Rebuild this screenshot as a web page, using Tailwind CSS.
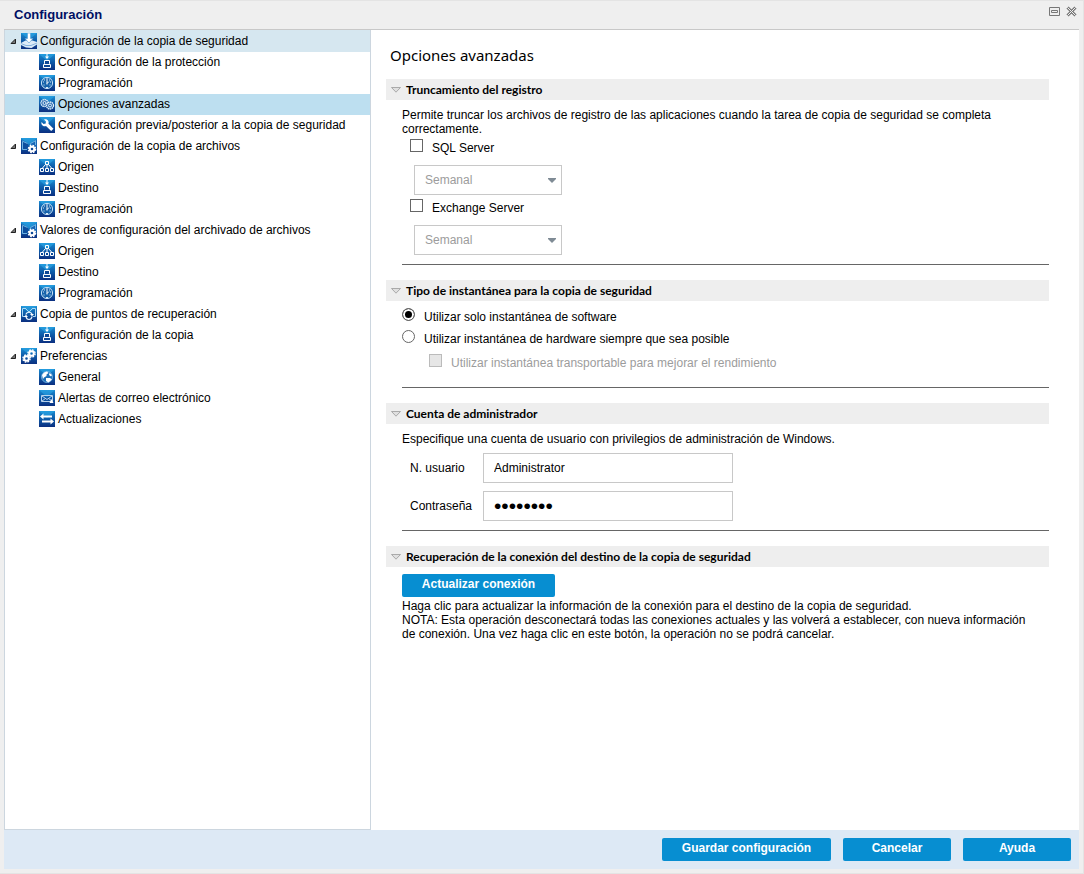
<!DOCTYPE html>
<html lang="es">
  <head>
    <meta charset="UTF-8" />
    <meta name="viewport" content="width=device-width, initial-scale=1.0" />
    <title>Configuración</title>
    <script src="https://cdn.jsdelivr.net/npm/@tailwindcss/browser@4"></script>
  </head>

  <body class="font-['Liberation_Sans',Arial,sans-serif] text-xs leading-[14px] text-black">
    <!-- icon sprites -->
    <svg class="absolute size-0" aria-hidden="true">
      <defs>
        <linearGradient id="tile" x1="0" y1="0" x2="0" y2="1">
          <stop offset="0" stop-color="#1a8ad0" />
          <stop offset="0.5" stop-color="#0d5aa8" />
          <stop offset="1" stop-color="#0b2f80" />
        </linearGradient>
        <g id="bg">
          <rect width="16" height="16" fill="url(#tile)" />
          <path d="M0 0h16L8 7z" fill="#2fb0ee" opacity=".5" />
        </g>
        <g id="gear">
          <circle r="2.300" fill="none" stroke="#fff" stroke-width="2" />
          <circle r="3.600" fill="none" stroke="#fff" stroke-width="1.400" stroke-dasharray="1.700 1.130" />
        </g>
        <symbol id="backup" viewBox="0 0 16 16">
          <use href="#bg" />
          <path d="M0 10 4.500 7.500h7L16 9v2.500L10.500 15 5 14.500 0 12z" fill="#dcebf8" />
          <path d="M0 10.500l5 2h5l6-2.500" fill="none" stroke="#6fa5d6" stroke-width=".8" />
          <path d="M6.500 0h3v5.500H12L8 10 4 5.500h2.500z" fill="#fff" stroke="#4f9bd6" stroke-width=".6" />
        </symbol>
        <symbol id="target" viewBox="0 0 16 16">
          <use href="#bg" />
          <path d="M8 0v3" stroke="#fff" />
          <path d="M6 2.500h4L8 5z" fill="#fff" />
          <path d="M5.500 6.500v3l-1 1v3h7v-3l-1-1v-3z" fill="#0d4796" stroke="#fff" />
          <path d="M5 10.500h6" stroke="#fff" />
        </symbol>
        <symbol id="clock" viewBox="0 0 16 16">
          <use href="#bg" />
          <circle cx="8" cy="8" r="5.600" fill="#1763ab" stroke="#c4dff5" />
          <path d="M4 7h1M4.500 10h1M11 7h1M10.500 10h1M7.500 3.500h1M7 12.500h2M5 5h1M10 5h1" stroke="#d8eafa" />
          <path d="M8 4v5.500M8 8.500 10 6.500" fill="none" stroke="#fff" />
        </symbol>
        <symbol id="gears" viewBox="0 0 16 16">
          <use href="#bg" />
          <g fill="#2b6cb0" stroke="#e3effa">
            <circle cx="5.500" cy="7" r="3.500" stroke-width="1.300" stroke-dasharray="1.500 .5" />
            <circle cx="5.500" cy="7" r="1.500" />
            <circle cx="11" cy="9.500" r="3.500" stroke-width="1.300" stroke-dasharray="1.500 .5" />
            <circle cx="11" cy="9.500" r="1.500" />
          </g>
        </symbol>
        <symbol id="wrench" viewBox="0 0 16 16">
          <use href="#bg" />
          <path d="M2.500 5 4.500 7 6.700 6.500 7 4.500 5 2.500C8 1.700 10.300 4 9.500 6.700L14.500 11.700 12.200 14 7 9C4.500 10 1.800 8 2.500 5z" fill="#fff" />
        </symbol>
        <symbol id="files" viewBox="0 0 16 16">
          <use href="#bg" />
          <path d="M0 2 7 5.500v6.500H0z" fill="#0d4f9f" />
          <path d="M16 2 9 5.500V9h7z" fill="#1565b5" />
          <path d="M1.500 4v7.500H6M1 3l5.500 2.500M15 2.500 9.500 5.500V8M14.500 3v4" fill="none" stroke="#79bdea" stroke-width=".9" />
          <use href="#gear" x="11" y="11" />
        </symbol>
        <symbol id="nodes" viewBox="0 0 16 16">
          <use href="#bg" />
          <path d="M6.500 2.500h3v3h-3zM6.500 5.500 3.500 9M9.500 5.500 12.500 9M8 5.500V9M1.500 9.500h3v3h-3zM6.500 9.500h3v3h-3zM11.500 9.500h3v3h-3z" fill="none" stroke="#fff" />
        </symbol>
        <symbol id="points" viewBox="0 0 16 16">
          <use href="#bg" />
          <path d="M5 2.500H1.500v8H4M11 2.500h3.500v8H12M4.500 2.500 8 6l3.500-3.500" fill="none" stroke="#a8d6f5" />
          <path d="M5 8.500c.5-3 5.500-3 6 0M5 10.500c.5 4 5.500 4 6 0" fill="none" stroke="#e8f4fd" stroke-width="1.200" />
          <path d="M9 8h4l-2 2.300zM3 11h4L5 8.800z" fill="#fff" />
        </symbol>
        <symbol id="prefs" viewBox="0 0 16 16">
          <use href="#bg" />
          <use href="#gear" x="10.500" y="5.500" />
          <use href="#gear" x="5.500" y="10.500" />
        </symbol>
        <symbol id="globe" viewBox="0 0 16 16">
          <use href="#bg" />
          <circle cx="8" cy="8" r="5.500" fill="#1c6fb8" stroke="#8cc4ee" stroke-width=".7" />
          <path d="M3 6 5 3.500 8 2.500 9.500 4 7.500 5.500 7.500 7 5 8.500 4 10zM10.500 4l2.500 2L12 7.500 10 6zM7 9h4l2 1.500-3.500 3L7 12z" fill="#fff" />
        </symbol>
        <symbol id="mail" viewBox="0 0 16 16">
          <use href="#bg" />
          <path d="M2.500 5.500h11v6h-11zM3 6l5 3.500L13 6M3 11l3.500-2.500M13 11 9.500 8.500" fill="none" stroke="#c9dff3" stroke-width=".9" />
          <path d="M10.500 13 12.500 9l2 4z" fill="#fff" />
        </symbol>
        <symbol id="sync" viewBox="0 0 16 16">
          <use href="#bg" />
          <path d="M1 5.500 4.500 2.500v2H13v2H4.500v2zM15 10.500l-3.500-3v2H3v2h8.500v2z" fill="#fff" />
        </symbol>
        <symbol id="collapse" viewBox="0 0 10 6">
          <path d="M.5.5h9L5 5.200z" fill="#e0e0e0" stroke="#a3a3a3" stroke-width=".9" />
        </symbol>
        <symbol id="caret" viewBox="0 0 8 5">
          <path d="M0 0h8v1L4 5 0 1z" fill="#7f8b95" />
        </symbol>
        <symbol id="expanded" viewBox="0 0 7 7">
          <path d="M5.500 1v4.500H1z" fill="#777" stroke="#222" stroke-linejoin="round" />
        </symbol>
      </defs>
    </svg>

    <div class="flex min-h-screen flex-col border-y border-r border-[#e4e4e4] bg-[#efefef] pr-1 pb-1 pl-1">
      <!-- title bar -->
      <header class="flex h-[29px] items-center justify-between border-b border-[#c8c8c8] pr-[2px] pl-[10px]">
        <h1 class="text-[13px] font-bold text-[#000f64]">Configuración</h1>
        <div class="flex gap-[6px] pb-2">
          <button type="button" aria-label="Maximizar">
            <svg class="h-[11px] w-[11px]" viewBox="0 0 11 11" fill="none" stroke="#777"><path d="M.5 1.500h10v8H.5zM2.500 4.500h6v2h-6z" /></svg>
          </button>
          <button type="button" aria-label="Cerrar">
            <svg class="h-[11px] w-[11px]" viewBox="0 0 11 11" fill="none">
              <path d="M1.500 1.500l8 8M9.500 1.500l-8 8" stroke="#777" stroke-width="3" />
              <path d="M1.500 1.500l8 8M9.500 1.500l-8 8" stroke="#efefef" />
            </svg>
          </button>
        </div>
      </header>

      <div class="flex flex-1">
        <!-- tree -->
        <nav class="w-[367px] shrink-0 border-x border-b border-[#ccd6df] bg-white">
          <ul id="tree"></ul>
        </nav>

        <!-- content -->
        <main class="flex-1 bg-white pr-[30px] pl-[15px]">
          <h2 class="px-1 pt-4 pb-[15px] font-['Noto_Sans',sans-serif] text-[15px] leading-[18px]">Opciones avanzadas</h2>

          <form id="options" class="flex flex-col gap-[15px]">
            <section>
              <h3 class="flex h-[21px] items-center gap-[5px] bg-[#eee] pl-[5px] font-['Lato',sans-serif] font-bold">
                <svg class="h-[6px] w-[10px]"><use href="#collapse" /></svg>Truncamiento del registro
              </h3>
              <div class="ml-4 border-b border-[#666] pt-2 pb-2">
                <p class="pr-4">Permite truncar los archivos de registro de las aplicaciones cuando la tarea de copia de seguridad se completa correctamente.</p>
                <div class="flex gap-[9px] pl-2">
                  <input id="sql" type="checkbox" class="mt-[3px] size-[13px] appearance-none border border-[#666] bg-white" />
                  <label for="sql" class="leading-6">SQL Server</label>
                </div>
                <div class="relative mt-[5px] mb-px ml-3 w-[148px]">
                  <select aria-label="Frecuencia de SQL Server" disabled class="h-[30px] w-full appearance-none border border-[#c8c8c8] bg-white px-[10px] text-[#9c9c9c] opacity-100">
                    <option>Semanal</option>
                  </select>
                  <svg class="pointer-events-none absolute top-[13px] right-[6px] h-[5px] w-2"><use href="#caret" /></svg>
                </div>
                <div class="flex gap-[9px] pl-2">
                  <input id="exchange" type="checkbox" class="mt-[3px] size-[13px] appearance-none border border-[#666] bg-white" />
                  <label for="exchange" class="leading-6">Exchange Server</label>
                </div>
                <div class="relative mt-[5px] mb-px ml-3 w-[148px]">
                  <select aria-label="Frecuencia de Exchange Server" disabled class="h-[30px] w-full appearance-none border border-[#c8c8c8] bg-white px-[10px] text-[#9c9c9c] opacity-100">
                    <option>Semanal</option>
                  </select>
                  <svg class="pointer-events-none absolute top-[13px] right-[6px] h-[5px] w-2"><use href="#caret" /></svg>
                </div>
              </div>
            </section>

            <section>
              <h3 class="flex h-[21px] items-center gap-[5px] bg-[#eee] pl-[5px] font-['Lato',sans-serif] font-bold">
                <svg class="h-[6px] w-[10px]"><use href="#collapse" /></svg>Tipo de instantánea para la copia de seguridad
              </h3>
              <div class="ml-4 border-b border-[#666] pt-[5px] pb-[13px]">
                <div class="flex gap-[9px]">
                  <input id="software" type="radio" name="snapshot" checked class="mt-[2px] size-[13px] appearance-none rounded-full border border-[#666] bg-white checked:bg-black checked:shadow-[inset_0_0_0_2px_#fff]" />
                  <label for="software" class="leading-[22px]">Utilizar solo instantánea de software</label>
                </div>
                <div class="flex gap-[9px]">
                  <input id="hardware" type="radio" name="snapshot" class="mt-[2px] size-[13px] appearance-none rounded-full border border-[#666] bg-white checked:bg-black checked:shadow-[inset_0_0_0_2px_#fff]" />
                  <label for="hardware" class="leading-[22px]">Utilizar instantánea de hardware siempre que sea posible</label>
                </div>
                <div class="mt-[2px] flex gap-[9px] pl-[27px]">
                  <input id="transportable" type="checkbox" disabled class="mt-[2px] size-[13px] appearance-none border border-[#bbb] bg-[#e6e6e6]" />
                  <label for="transportable" class="leading-[22px] text-[#9c9c9c]">Utilizar instantánea transportable para mejorar el rendimiento</label>
                </div>
              </div>
            </section>

            <section>
              <h3 class="flex h-[21px] items-center gap-[5px] bg-[#eee] pl-[5px] font-['Lato',sans-serif] font-bold">
                <svg class="h-[6px] w-[10px]"><use href="#collapse" /></svg>Cuenta de administrador
              </h3>
              <div class="ml-4 border-b border-[#666] pt-2 pb-[9px]">
                <p>Especifique una cuenta de usuario con privilegios de administración de Windows.</p>
                <div class="mt-[7px] grid grid-cols-[73px_250px] items-center gap-y-2 pl-2">
                  <label for="user">N. usuario</label>
                  <input id="user" type="text" value="Administrator" autocomplete="off" class="h-[30px] border border-[#c8c8c8] bg-white px-[10px]" />
                  <label for="password">Contraseña</label>
                  <input id="password" type="password" value="12345678" autocomplete="off" class="h-[30px] border border-[#c8c8c8] bg-white px-[10px] text-[21px]" />
                </div>
              </div>
            </section>

            <section>
              <h3 class="flex h-[21px] items-center gap-[5px] bg-[#eee] pl-[5px] font-['Lato',sans-serif] font-bold">
                <svg class="h-[6px] w-[10px]"><use href="#collapse" /></svg>Recuperación de la conexión del destino de la copia de seguridad
              </h3>
              <div class="ml-4 pt-[7px]">
                <button type="button" class="h-[23px] w-[153px] rounded-[2px] bg-[#078ed1] pb-1 font-bold text-white">Actualizar conexión</button>
                <p class="mt-[2px] pr-4">Haga clic para actualizar la información de la conexión para el destino de la copia de seguridad.</p>
                <p class="pr-4">NOTA: Esta operación desconectará todas las conexiones actuales y las volverá a establecer, con nueva información de conexión. Una vez haga clic en este botón, la operación no se podrá cancelar.</p>
              </div>
            </section>
          </form>
        </main>
      </div>

      <!-- actions -->
      <footer class="flex justify-end gap-3 bg-[#dde9f5] p-2">
        <button type="submit" form="options" class="h-[23px] w-[169px] rounded-[2px] bg-[#078ed1] pb-1 font-bold text-white">Guardar configuración</button>
        <button type="button" class="h-[23px] w-[108px] rounded-[2px] bg-[#078ed1] pb-1 font-bold text-white">Cancelar</button>
        <button type="button" class="h-[23px] w-[108px] rounded-[2px] bg-[#078ed1] pb-1 font-bold text-white">Ayuda</button>
      </footer>
    </div>

    <script>
      const treeDOM = document.querySelector('#tree')

      const groups = [
        {
          label: 'Configuración de la copia de seguridad',
          icon: 'backup',
          open: true,
          items: [
            { label: 'Configuración de la protección', icon: 'target' },
            { label: 'Programación', icon: 'clock' },
            { label: 'Opciones avanzadas', icon: 'gears', active: true },
            { label: 'Configuración previa/posterior a la copia de seguridad', icon: 'wrench' },
          ],
        },
        {
          label: 'Configuración de la copia de archivos',
          icon: 'files',
          items: [
            { label: 'Origen', icon: 'nodes' },
            { label: 'Destino', icon: 'target' },
            { label: 'Programación', icon: 'clock' },
          ],
        },
        {
          label: 'Valores de configuración del archivado de archivos',
          icon: 'files',
          items: [
            { label: 'Origen', icon: 'nodes' },
            { label: 'Destino', icon: 'target' },
            { label: 'Programación', icon: 'clock' },
          ],
        },
        {
          label: 'Copia de puntos de recuperación',
          icon: 'points',
          items: [{ label: 'Configuración de la copia', icon: 'target' }],
        },
        {
          label: 'Preferencias',
          icon: 'prefs',
          items: [
            { label: 'General', icon: 'globe' },
            { label: 'Alertas de correo electrónico', icon: 'mail' },
            { label: 'Actualizaciones', icon: 'sync' },
          ],
        },
      ]

      function itemComponent(item) {
        return `
          <li>
            <a href="#" class="flex h-[21px] items-center gap-[3px] pb-px pl-[34px] ${item.active ? 'bg-[#bddff0]' : ''}">
              <svg class="size-4"><use href="#${item.icon}" /></svg>${item.label}
            </a>
          </li>`
      }

      function groupComponent(group) {
        return `
          <li>
            <a href="#" class="flex items-center gap-[3px] pl-[5px] ${group.open ? 'h-[22px] bg-[#d6e7f0]' : 'h-[21px] pb-px'}">
              <svg class="mr-[1px] size-[7px]"><use href="#expanded" /></svg>
              <svg class="size-4"><use href="#${group.icon}" /></svg>${group.label}
            </a>
            <ul>${group.items.map(itemComponent).join('')}</ul>
          </li>`
      }

      treeDOM.innerHTML = groups.map(groupComponent).join('')
    </script>
  </body>
</html>
